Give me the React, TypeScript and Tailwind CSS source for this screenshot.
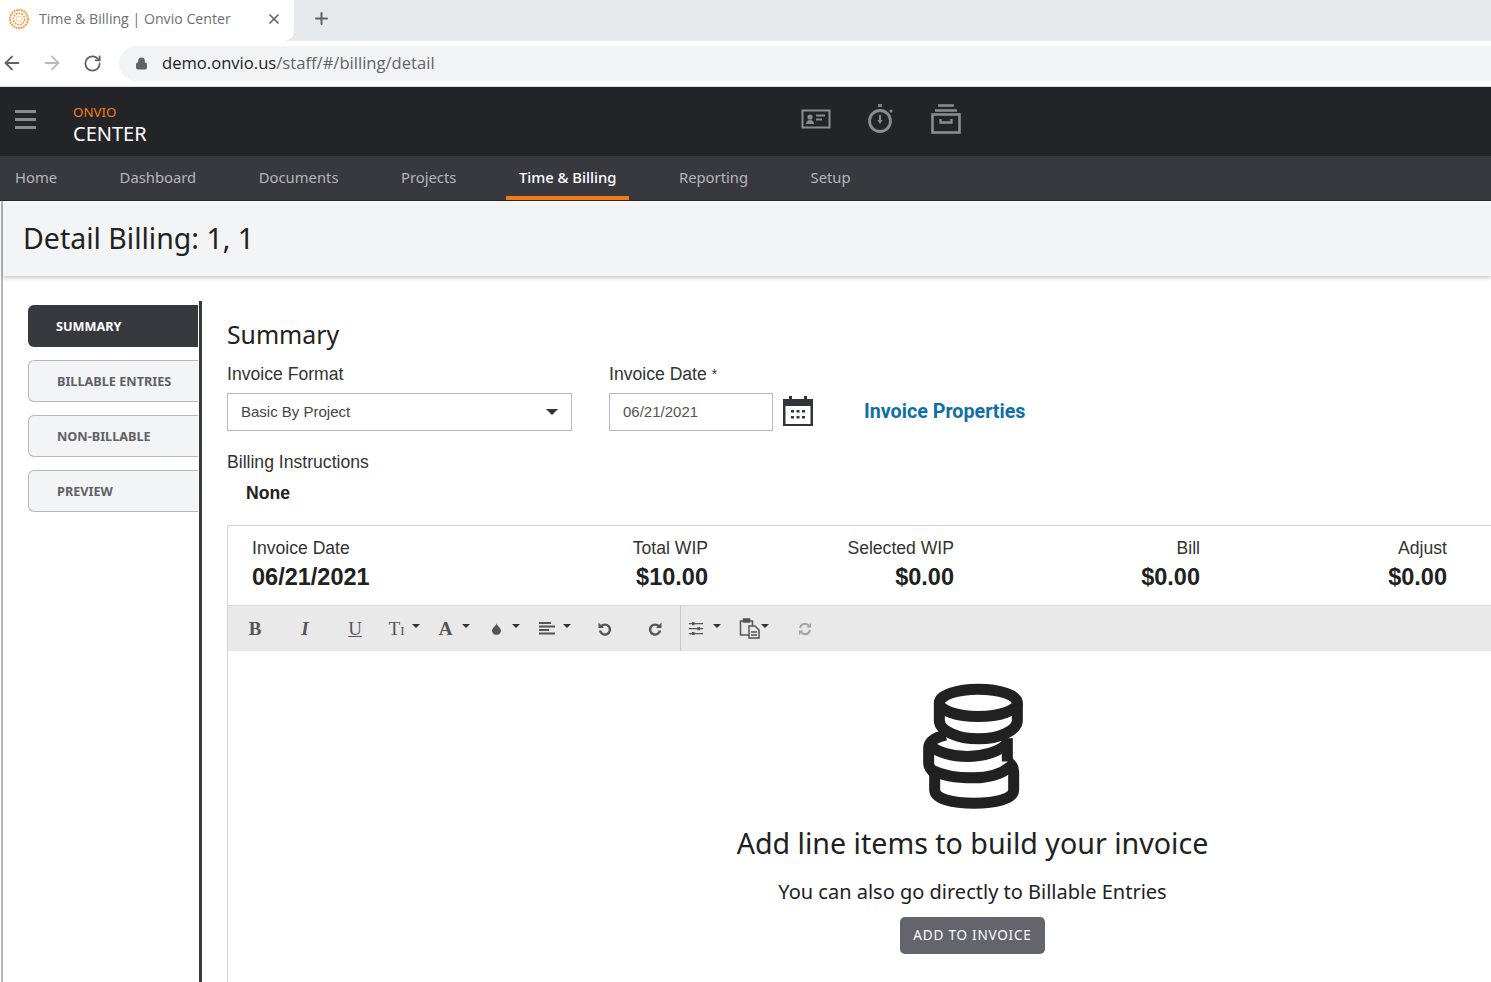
import { ArrowLeft, ArrowRight, Lock, Plus, RotateCw, X } from "lucide-react";

const brand = "font-['Noto_Sans',sans-serif]";
const body = "font-['Liberation_Sans',sans-serif]";

function Caret() {
  return <span className="inline-block w-0 h-0 mb-[6px] border-x-[4px] border-x-transparent border-t-[4px] border-t-[#333]"></span>;
}

function Favicon() {
  return (
    <svg width="22" height="22" viewBox="0 0 22 22" fill="none" stroke="#f7a14a">
      <circle cx="11" cy="11" r="9" strokeWidth="2" strokeDasharray="2 0.6" />
      <circle cx="11" cy="11" r="5.6" strokeWidth="1.6" strokeDasharray="2 0.8" />
      <circle cx="11" cy="11" r="2.8" stroke="#fbd0a0" strokeWidth="1" />
    </svg>
  );
}

function ContactIcon() {
  return (
    <svg width="30" height="22" viewBox="0 0 30 22" fill="none" className="text-[#8b8c92]">
      <rect x="1.5" y="2.5" width="27" height="17" stroke="currentColor" strokeWidth="2" />
      <circle cx="9" cy="9" r="2.6" fill="currentColor" />
      <path d="M5 16c0-3 2-4 4-4s4 1 4 4z" fill="currentColor" />
      <path d="M15 7.5h9M15 11.5h6" stroke="currentColor" strokeWidth="2" />
    </svg>
  );
}

function TimerIcon() {
  return (
    <svg width="28" height="32" viewBox="0 0 28 32" fill="none" className="text-[#8b8c92]">
      <circle cx="13" cy="18" r="10.5" stroke="currentColor" strokeWidth="2.8" />
      <path d="M11 2.5h4" stroke="currentColor" strokeWidth="2.6" />
      <circle cx="24" cy="8" r="1.5" fill="currentColor" />
      <path d="M13 12v6" stroke="currentColor" strokeWidth="2" />
      <path d="M10.5 17h5L13 21z" fill="currentColor" />
    </svg>
  );
}

function ArchiveIcon() {
  return (
    <svg width="30" height="32" viewBox="0 0 30 32" fill="none" className="text-[#8b8c92]">
      <path d="M7 2.5h16M4 7.5h22" stroke="currentColor" strokeWidth="2.6" />
      <rect x="1.5" y="11.5" width="27" height="18" stroke="currentColor" strokeWidth="2.6" />
      <path d="M9.5 16v3.500h11V16" stroke="currentColor" strokeWidth="2.4" />
    </svg>
  );
}

function CalendarIcon() {
  return (
    <svg width="32" height="32" viewBox="0 0 32 32">
      <path d="M1 5h6V2h3v3h12V2h3v3h6v28H1z" fill="#33343a" />
      <rect x="3.5" y="12" width="25" height="18" fill="#fff" />
      <path d="M9 16h3v2.500H9zM14.500 16h3v2.500h-3zM20 16h3v2.500h-3zM9 22h3v2.500H9zM14.500 22h3v2.500h-3zM20 22h3v2.500h-3z" fill="#33343a" />
    </svg>
  );
}

function CoinsIcon() {
  return (
    <svg width="100" height="127" viewBox="67 40 300 380" fill="none" stroke="#212121" strokeWidth="33">
      {/* top coin */}
      <ellipse cx="233" cy="99" rx="117" ry="41" />
      <path d="M116 100v52c0 30 55 55 117 55s117-25 117-55v-52" />
      {/* middle coin */}
      <path d="M135 195c-33 8-51 22-51 40v45c0 12 8 22 20 30" />
      <path d="M85 225c25 22 70 35 115 35s100-15 120-40" />
      <path d="M320 205v70" />
      {/* bottom coin */}
      <path d="M92 300c30 16 75 24 125 24s95-14 123-44" />
      <path d="M102 315v45c0 28 55 40 118 40s119-12 119-40v-55c0-12-6-22-18-30" />
    </svg>
  );
}

function TextButton({ children, className }: { children: React.ReactNode; className?: string }) {
  return <span className={`font-['Liberation_Serif',serif] text-[#555] text-[19px] leading-none ${className ?? ""}`}>{children}</span>;
}

function AlignIcon() {
  return (
    <svg width="16" height="13" viewBox="0 0 16 13" fill="#555">
      <path d="M0 0h12v2H0zM0 3.500h16v2H0zM0 7h10v2H0zM0 10.500h16v2H0z" />
    </svg>
  );
}

function UndoIcon({ flip }: { flip?: boolean }) {
  return (
    <svg width="14" height="14" viewBox="0 0 14 14" fill="none" stroke="#555" strokeWidth="2.4" className={flip ? "-scale-x-100" : ""}>
      <path d="M3 4.500A5 5 0 1 1 2 8.500" />
      <path d="M0.500 0.500v5.500h5.500z" fill="#555" stroke="none" />
    </svg>
  );
}

function SlidersIcon() {
  return (
    <svg width="14" height="13" viewBox="0 0 14 13" fill="#555">
      <path d="M0 1h14v1.200H0zM0 6h14v1.200H0zM0 11h14v1.200H0z" />
      <rect x="3" y="0" width="2.500" height="3.200" />
      <rect x="8.500" y="5" width="2.500" height="3.200" />
      <rect x="3" y="10" width="2.500" height="3" />
    </svg>
  );
}

function PasteIcon() {
  return (
    <svg width="22" height="21" viewBox="0 0 22 21" fill="none" stroke="#555" strokeWidth="1.500">
      <path d="M10 17H1.500V3h12v5" />
      <rect x="4.500" y="1" width="6" height="3" fill="#555" />
      <path d="M10 8h6l4 4v8h-10z" fill="#e9e9e9" />
      <path d="M12 14h6M12 17h6" />
    </svg>
  );
}

function RefreshIcon() {
  return (
    <svg width="14" height="14" viewBox="0 0 14 14" fill="none" stroke="#a3a3a3" strokeWidth="2">
      <path d="M2 6a5 5 0 0 1 9-2" />
      <path d="M12 8a5 5 0 0 1-9 2" />
      <path d="M13 1v4.500H8.500zM1 13V8.500h4.500z" fill="#a3a3a3" stroke="none" />
    </svg>
  );
}

const navItems = ["Home", "Dashboard", "Documents", "Projects", "Time & Billing", "Reporting", "Setup"];
const sideItems = ["SUMMARY", "BILLABLE ENTRIES", "NON-BILLABLE", "PREVIEW"];
const totals = [
  { label: "Total WIP", value: "$10.00" },
  { label: "Selected WIP", value: "$0.00" },
  { label: "Bill", value: "$0.00" },
  { label: "Adjust", value: "$0.00" },
];

export default function App() {
  return (
    <div className={`h-[982px] w-full overflow-hidden bg-white ${body}`}>
      {/* Chrome tabs */}
      <div className="h-[41px] flex bg-[#e6e9ec] font-['Open_Sans',sans-serif]">
        <div className="w-[294px] h-[41px] bg-white rounded-br-[10px] flex items-center pl-[8px] pb-[4px]">
          <Favicon />
          <span className="ml-[9px] text-[14.150px] text-[#6b7075] w-[227px]">Time &amp; Billing | Onvio Center</span>
          <X size={16} strokeWidth={2.5} className="text-[#5f6368]" />
        </div>
        <div className="flex items-center pl-[18px] pb-[4px]">
          <Plus size={19} strokeWidth={2.500} className="text-[#5f6368]" />
        </div>
      </div>

      {/* Chrome url bar */}
      <div className="h-[46px] flex items-center bg-white border-b border-[#dcdcdc] pb-[1px]">
        <ArrowLeft size={22} className="ml-[1px] text-[#5f6368]" />
        <ArrowRight size={22} className="ml-[18px] text-[#b9bbbe]" />
        <RotateCw size={19} strokeWidth={2.300} className="ml-[20px] text-[#5f6368]" />
        <div className="ml-[17px] flex-1 h-[35px] bg-[#f1f3f4] rounded-l-full flex items-center pl-[16px] font-['Open_Sans',sans-serif] text-[16.600px]">
          <Lock size={13} fill="#5f6368" className="text-[#5f6368]" />
          <span className="ml-[14px] pt-[1px] text-[#202124]">demo.onvio.us</span>
          <span className="pt-[1px] text-[#5f6368]">/staff/#/billing/detail</span>
        </div>
      </div>

      {/* App header */}
      <header className={`h-[69px] bg-[#232428] flex items-center ${brand}`}>
        <div className="ml-[15px] w-[21px] flex flex-col gap-[5px] mb-[4px]">
          <span className="h-[3px] bg-[#8b8c92]"></span>
          <span className="h-[3px] bg-[#8b8c92]"></span>
          <span className="h-[3px] bg-[#8b8c92]"></span>
        </div>
        <div className="ml-[37px] flex flex-col pt-[7px]">
          <span className="text-[13.300px] leading-[18px] text-[#f57c14]">ONVIO</span>
          <span className="text-[20px] leading-[26px] text-white">CENTER</span>
        </div>
        <div className="ml-[654px] flex items-center gap-[36px] mb-[6px]">
          <ContactIcon />
          <TimerIcon />
          <ArchiveIcon />
        </div>
      </header>

      {/* Main nav */}
      <nav className={`h-[45px] bg-[#38393f] flex pl-[2px] text-[14.800px] border-b border-[#26272b] ${brand}`}>
        {navItems.map((item) => (
          <div
            key={item}
            className={
              item === "Time & Billing"
                ? "px-[13px] mr-[36.500px] flex items-center text-white font-medium border-b-[4px] border-[#f57c14] pt-[2px]"
                : "px-[13px] mr-[36.500px] flex items-center text-[#b5b6bb] pb-[2px]"
            }
          >
            {item}
          </div>
        ))}
      </nav>

      <div className="border-l-2 border-[#b7b8bd] ml-[1px] h-[781px]">
        {/* Page title */}
        <div className={`h-[75px] bg-[#f3f4f6] flex items-center pl-[20px] shadow-[0_2px_4px_rgba(0,0,0,0.22)] ${brand}`}>
          <h1 className="text-[28.500px] text-[#212121]">Detail Billing: 1, 1</h1>
        </div>

        <div className="flex pt-[25px] pl-[25px]">
          {/* Side tabs */}
          <aside className={`w-[170px] pt-[4px] flex flex-col gap-[13px] ${brand}`}>
            {sideItems.map((item) => (
              <div
                key={item}
                className={
                  item === "SUMMARY"
                    ? "h-[42px] flex items-center pl-[28px] pt-[1px] rounded-l-[6px] bg-[#38393f] text-white text-[12.700px] font-bold"
                    : "h-[42px] flex items-center pl-[28px] pt-[1px] rounded-l-[6px] bg-[#f3f4f6] border border-r-0 border-[#b7b8bd] text-[#5f6068] text-[12.700px] font-bold"
                }
              >
                {item}
              </div>
            ))}
          </aside>
          <div className="w-[3px] h-[700px] bg-[#38393f] ml-[1px]"></div>

          {/* Main */}
          <main className="ml-[25px] flex-1 min-w-0">
            <h2 className={`mt-[16px] text-[24.800px] leading-[34px] text-[#212121] ${brand}`}>Summary</h2>

            <div className="flex mt-[11px]">
              <div className="w-[345px]">
                <label className="block text-[17.600px] leading-[24px] text-[#333]">Invoice Format</label>
                <div className="mt-[7px] h-[38px] border border-[#b7b8bd] flex items-center justify-between pl-[13px] pr-[13px] text-[15px] text-[#444]">
                  Basic By Project
                  <span className="inline-block w-0 h-0 border-x-[6px] border-x-transparent border-t-[6px] border-t-[#33343a]"></span>
                </div>
              </div>
              <div className="ml-[37px]">
                <label className="block text-[17.600px] leading-[24px] text-[#333]">
                  Invoice Date <span className="text-[14px] align-top">*</span>
                </label>
                <div className="mt-[7px] flex items-center">
                  <div className="w-[164px] h-[38px] border border-[#b7b8bd] flex items-center pl-[13px] text-[15px] text-[#555]">
                    06/21/2021
                  </div>
                  <span className="ml-[9px] -mt-[4px]">
                    <CalendarIcon />
                  </span>
                  <a className="ml-[50px] font-['Roboto',sans-serif] text-[19.700px] font-bold text-[#0f6fa8]">Invoice Properties</a>
                </div>
              </div>
            </div>

            <div className="mt-[19px] text-[17.600px] leading-[24px] text-[#333]">Billing Instructions</div>
            <div className="mt-[7px] ml-[19px] text-[17.600px] leading-[24px] font-bold text-[#212121]">None</div>

            {/* Totals + editor */}
            <div className="mt-[20px] w-[1490px] border-l border-t border-[#d5d5d8]">
              <div className="h-[79px] pl-[24px] grid grid-cols-[210px_246px_246px_246px_247px] items-start pt-[10px]">
                <div>
                  <div className="text-[17.600px] leading-[24px] text-[#333]">Invoice Date</div>
                  <div className="mt-[1px] text-[23.500px] leading-[33px] font-bold text-[#212121]">06/21/2021</div>
                </div>
                {totals.map((t) => (
                  <div key={t.label} className="text-right">
                    <div className="text-[17.600px] leading-[24px] text-[#333]">{t.label}</div>
                    <div className="mt-[1px] text-[23.500px] leading-[33px] font-bold text-[#212121]">{t.value}</div>
                  </div>
                ))}
              </div>

              {/* Toolbar */}
              <div className="h-[46px] bg-[#e9e9e9] border-t border-[#d8d8d8] flex items-center pl-[2px]">
                <div className="w-[50px] flex justify-center"><TextButton className="font-bold">B</TextButton></div>
                <div className="w-[50px] flex justify-center"><TextButton className="italic font-bold">I</TextButton></div>
                <div className="w-[50px] flex justify-center"><TextButton className="underline">U</TextButton></div>
                <div className="w-[50px] flex justify-center items-center gap-[8px] pr-[1px]">
                  <TextButton>T<span className="text-[13px]">I</span></TextButton>
                  <Caret />
                </div>
                <div className="w-[50px] flex justify-center items-center gap-[10px] pr-[1px]">
                  <TextButton className="font-bold">A</TextButton>
                  <Caret />
                </div>
                <div className="w-[50px] flex justify-center items-center gap-[11px] pl-[1px]">
                  <svg width="9" height="12" viewBox="0 0 10 13" fill="#555"><path d="M5 0c.5 3 5 5 5 8.500a5 4.500 0 0 1-10 0C0 5 4.500 3 5 0z" /></svg>
                  <Caret />
                </div>
                <div className="w-[50px] flex justify-center items-center gap-[8px]">
                  <AlignIcon />
                  <Caret />
                </div>
                <div className="w-[50px] flex justify-center"><UndoIcon /></div>
                <div className="w-[50px] flex justify-center pr-[1px]"><UndoIcon flip /></div>
                <div className="w-[1px] h-[45px] bg-[#c9c9c9]"></div>
                <div className="w-[50px] flex justify-center items-center gap-[10px] pr-[3px]">
                  <SlidersIcon />
                  <Caret />
                </div>
                <div className="w-[50px] flex justify-center items-center pr-[5px]">
                  <PasteIcon />
                  <Caret />
                </div>
                <div className="w-[50px] flex justify-center ml-[-1px]"><RefreshIcon /></div>
              </div>

              {/* Empty state */}
              <div className={`h-[400px] flex flex-col items-center pt-[32px] ${brand}`}>
                <CoinsIcon />
                <div className="mt-[13px] text-[28.600px] leading-[40px] text-[#212121]">Add line items to build your invoice</div>
                <div className="mt-[15px] text-[20px] leading-[28px] text-[#212121]">You can also go directly to Billable Entries</div>
                <button className="mt-[11px] h-[37px] w-[145px] rounded-[5px] bg-[#63646c] text-white text-[13.500px] tracking-[0.8px]">
                  ADD TO INVOICE
                </button>
              </div>
            </div>
          </main>
        </div>
      </div>
    </div>
  );
}
